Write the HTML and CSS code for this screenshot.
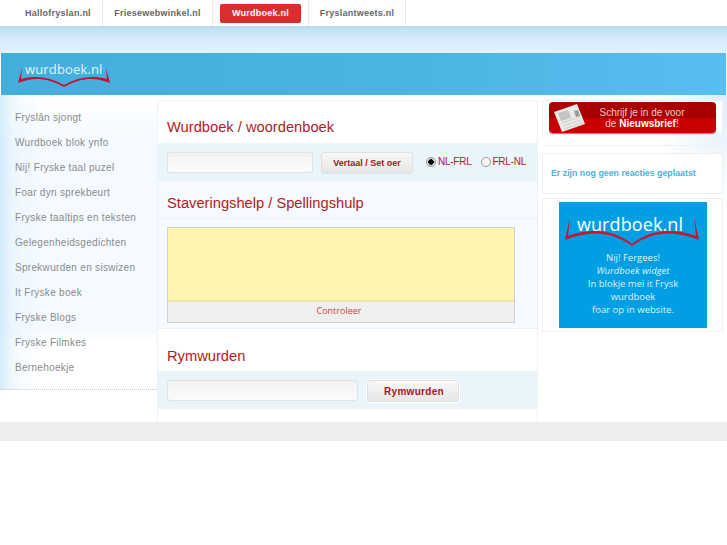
FILE: index.html
```html
<!DOCTYPE html>
<html lang="nl">
<head>
<meta charset="utf-8">
<title>Wurdboek</title>
<link rel="stylesheet" href="styles.css">
</head>
<body>
<nav class="topbar">
  <a class="tab">Hallofryslan.nl</a>
  <a class="tab">Friesewebwinkel.nl</a>
  <a class="tab tab-active"><span>Wurdboek.nl</span></a>
  <a class="tab">Fryslantweets.nl</a>
</nav>
<div class="sky"></div>
<header class="banner">
  <div class="logo">
    <span class="logo-text">wurdboek.nl</span>
    <svg class="logo-book" viewBox="0 0 92 19" width="92" height="19"><path d="M4 0 L0 15 C12 10 27 8 46 19 C65 8 80 10 92 15 L88 0 L89 11 C74 7 60 9 46 17 C32 9 18 7 3 11 Z" fill="#c8102e"/></svg>
  </div>
</header>
<div class="page">
  <aside class="side">
    <ul class="menu">
      <li>Fryslân sjongt</li>
      <li>Wurdboek blok ynfo</li>
      <li>Nij! Fryske taal puzel</li>
      <li>Foar dyn sprekbeurt</li>
      <li>Fryske taaltips en teksten</li>
      <li>Gelegenheidsgedichten</li>
      <li>Sprekwurden en siswizen</li>
      <li>It Fryske boek</li>
      <li>Fryske Blogs</li>
      <li>Fryske Filmkes</li>
      <li>Bernehoekje</li>
    </ul>
  </aside>
  <main class="main">
    <h2 class="title title-first">Wurdboek / woordenboek</h2>
    <div class="formrow">
      <div class="field field-a"></div>
      <div class="btn btn-a">Vertaal / Set oer</div>
      <label class="radio radio-a"><span class="dot dot-on"></span>NL-FRL</label>
      <label class="radio radio-b"><span class="dot"></span>FRL-NL</label>
    </div>
    <section class="spell">
      <h2 class="title title-spell">Staveringshelp / Spellingshulp</h2>
      <div class="checker">
        <div class="yellow"></div>
        <div class="check-btn">Controleer</div>
      </div>
    </section>
    <h2 class="title title-rym">Rymwurden</h2>
    <div class="formrow">
      <div class="field field-b"></div>
      <div class="btn btn-b">Rymwurden</div>
    </div>
  </main>
  <aside class="right">
    <div class="card card-news">
      <div class="news">
        <svg class="paper" viewBox="0 0 34 30" width="34" height="30"><path d="M2 9 L25 1 L33 21 L10 29 Z" fill="#e8e8e6"/><path d="M6 10 L16 7 L19 15 L9 18 Z" fill="#c4c4c2"/><path d="M22 8 L26 7 L28 13 L24 14 Z" fill="#9a9a98"/><path d="M10 20 L28 14 M11 23 L29 17 M12 26 L30 20" stroke="#cfcfcd" stroke-width="1"/></svg>
        <div class="news-text">Schrijf je in de voor<br>de <b>Nieuwsbrief</b>!</div>
      </div>
    </div>
    <div class="rule"></div>
    <div class="card card-react">Er zijn nog geen reacties geplaatst</div>
    <div class="card card-widget">
      <div class="widget">
        <div class="widget-logo">wurdboek.nl</div>
        <svg class="widget-book" viewBox="0 0 134 30" width="134" height="30"><path d="M5 0 L0 23 C22 14 45 13 67 29 C89 13 112 14 134 23 L129 0 L131 19 C108 11 86 12 67 27 C48 12 26 11 3 19 Z" fill="#d0112b"/></svg>
        <p class="widget-copy">Nij! Fergees!<br><i>Wurdboek widget</i><br>In blokje mei it Frysk<br>wurdboek<br>foar op in website.</p>
      </div>
    </div>
  </aside>
</div>
<footer class="foot"></footer>
</body>
</html>
```
FILE: styles.css
```css
* { box-sizing: border-box; }
html, body { margin: 0; padding: 0; background: #fff; }
body { font-family: "Liberation Sans", Arial, sans-serif; }

.topbar { display: flex; height: 27px; padding-left: 14px; background: #fff; border-bottom: 1px solid #c4d6e4; }
.tab { display: flex; align-items: center; justify-content: center; height: 26px; border-right: 1px solid #eaeaea; font-size: 9px; font-weight: bold; letter-spacing: .25px; color: #666; }
.tab:nth-child(1) { width: 89px; }
.tab:nth-child(2) { width: 110px; }
.tab:nth-child(3) { width: 96px; }
.tab:nth-child(4) { width: 97px; }
.tab-active span { display: block; width: 81px; height: 19px; margin-top: 1px; line-height: 19px; text-align: center; color: #fff; background: #d92e2e; border-radius: 2px; }

.sky { height: 26px; background: linear-gradient(#bcdef5, #d4eafa 40%, #e4f2fb); }
.banner { height: 42px; margin: 0 1px; background: linear-gradient(90deg, #43aedb, #4ab4e2 55%, #57bff0); }
.logo { position: relative; padding: 8px 0 0 24px; }
.logo-text { display: block; font-family: "Open Sans", sans-serif; font-size: 13px; line-height: 17px; letter-spacing: .15px; color: #e4f3fb; }
.logo-book { position: absolute; left: 17px; top: 15px; }

.page { display: flex; height: 327px; background: #fff; }
.side { width: 152px; background: #fff; }
.menu { list-style: none; width: 157px; height: 295px; margin: 0; padding: 10px 0 0 15px; background: linear-gradient(90deg, rgba(205,232,250,.8) 0, rgba(230,244,253,.5) 14px, rgba(255,255,255,0) 40px), linear-gradient(#fff 0, #f4faff 16%, #f4faff 80%, #fff 84%); border-bottom: 1px dotted #c9c9c9; }
.menu li { height: 25px; line-height: 25px; font-size: 10px; letter-spacing: .3px; color: #8a8a8a; white-space: nowrap; }

.main { width: 381px; margin: 5px 0 0 5px; background: #fff; border: 1px solid #eef3f7; border-bottom: 0; }
.title { margin: 0; padding-left: 9px; font-size: 14.7px; font-weight: normal; color: #b01c24; }
.title-first { height: 43px; padding-top: 16px; border-bottom: 1px dotted #dfe8ee; line-height: 20px; }
.formrow { display: flex; align-items: center; height: 37px; background: #e9f4fb; padding-left: 9px; }
.field { height: 21px; background: linear-gradient(#f2f2f2, #fbfbfb); border: 1px solid #e0e2e3; border-radius: 3px; }
.field-a { width: 146px; }
.field-b { width: 191px; }
.btn { height: 22px; line-height: 21px; text-align: center; font-weight: bold; color: #a8141f; background: linear-gradient(#f8f8f8, #e6e6e6); border: 1px solid #e0e0e0; border-radius: 3px; }
.btn-a { width: 92px; margin-left: 8px; font-size: 9px; }
.btn-b { width: 92px; margin-left: 9px; padding-left: 2px; font-size: 10px; letter-spacing: .3px; box-shadow: 0 0 0 1px #fff; }
.radio { display: flex; align-items: center; font-size: 10px; letter-spacing: -.25px; color: #b01c24; margin-top: -2px; }
.radio-a { margin-left: 13px; }
.radio-b { margin-left: 9px; }
.dot { width: 10px; height: 10px; margin-right: 2px; border: 1px solid #999; border-radius: 50%; background: #f6f6f6; }
.dot-on { background: radial-gradient(circle, #000 0, #000 2.5px, #ddd 3px); }

.spell { height: 148px; background: #f4faff; border-bottom: 1px dotted #dfe8ee; }
.title-spell { height: 38px; padding-top: 12px; line-height: 20px; border-bottom: 1px dotted #e2eaef; }
.checker { width: 348px; margin: 8px 0 0 9px; border: 1px solid #cfcfcf; }
.yellow { height: 74px; background: #fdf4b0; border-bottom: 2px solid #ece3a6; }
.check-btn { height: 20px; padding-right: 4px; line-height: 18px; text-align: center; font-family: "Open Sans", sans-serif; font-size: 9px; color: #c9443a; background: #efefef; }

.title-rym { height: 43px; padding-top: 17px; line-height: 20px; border-bottom: 1px dotted #dfe8ee; }

.right { flex: 1; padding: 5px 0 0 4px; background: radial-gradient(ellipse 70px 110px at 100% 0, #dcedfa, rgba(255,255,255,0)); }
.card { width: 181px; background: #fff; border: 1px solid #eef1f4; }
.card-news { height: 34px; padding: 1px 6px; }
.news { display: flex; align-items: center; height: 31px; border-radius: 4px; background: linear-gradient(#a80000 50%, #c80000 50%); box-shadow: 0 1px 1px #888; }
.paper { margin-left: 3px; }
.news-text { width: 112px; text-align: center; font-size: 10px; line-height: 11px; color: #f0cccc; white-space: nowrap; }
.news-text b { color: #fff; }
.rule { width: 181px; height: 1px; margin: 11px 0 7px; background: #eef1f4; }
.card-react { height: 41px; padding-left: 8px; line-height: 39px; font-size: 8.8px; font-weight: bold; color: #4bb0e0; white-space: nowrap; }
.card-widget { height: 134px; margin-top: 4px; padding: 3px 0 0 16px; }
.widget { position: relative; width: 148px; height: 126px; padding-top: 9px; text-align: center; background: #009fe3; overflow: hidden; }
.widget-logo { padding-right: 6px; font-family: "Open Sans", sans-serif; font-size: 18px; line-height: 26px; color: #fff; letter-spacing: .1px; }
.widget-book { position: absolute; left: 6px; top: 15px; }
.widget-copy { margin: 14px 0 0; font-family: "Open Sans", sans-serif; font-size: 9.5px; line-height: 13px; color: #dff3fc; }

.foot { height: 19px; background: #ededed; }
```
